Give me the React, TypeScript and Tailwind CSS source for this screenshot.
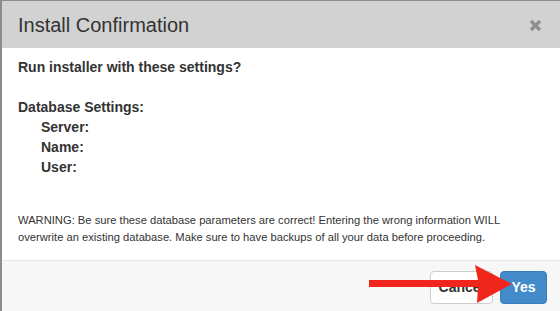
import React from "react";

export default function App() {
  return (
    <div className="relative w-[560px] h-[311px] flex bg-[#8c8c8c] overflow-hidden font-['Liberation_Sans',Arial,sans-serif] text-[#333]">
      <div className="w-[2px] shrink-0" />
      <div className="flex-1 flex flex-col mt-[1px]">
        <div className="h-[47px] shrink-0 bg-[#d2d2d2] flex items-center justify-between pl-[16px] pr-[18px]">
          <h4 className="text-[20px] leading-[22px] text-[#333]">Install Confirmation</h4>
          <svg width="13" height="13" viewBox="0 0 13 13" className="mt-[1px]">
            <path d="M2 2 L11 11 M11 2 L2 11" stroke="#8e8e8e" strokeWidth="3.4" strokeLinecap="butt" />
          </svg>
        </div>
        <div className="flex-1 bg-white pl-[16px] pt-[9px] text-[14px] leading-[20px]">
          <div className="font-bold">Run installer with these settings?</div>
          <div className="h-[20px]" />
          <div className="font-bold">Database Settings:</div>
          <div className="font-bold pl-[23px]">Server:</div>
          <div className="font-bold pl-[23px]">Name:</div>
          <div className="font-bold pl-[23px]">User:</div>
          <p className="mt-[35px] text-[11.2px] leading-[17px] pr-[20px]">
            WARNING: Be sure these database parameters are correct! Entering the wrong information WILL
            <br />
            overwrite an existing database. Make sure to have backups of all your data before proceeding.
          </p>
        </div>
        <div className="h-[51px] shrink-0 border-t border-[#e5e5e5] bg-[#f7f7f7] flex justify-end items-start pt-[10px] pr-[13px] gap-[7px]">
          <button className="w-[63px] h-[33px] rounded-[4px] border border-[#cccccc] bg-white text-[14px] font-bold text-[#333]">
            Cancel
          </button>
          <button className="w-[47px] h-[33px] rounded-[4px] border border-[#357ebd] bg-[#428bca] text-[14px] font-bold text-white">
            Yes
          </button>
        </div>
      </div>
      <svg className="absolute left-0 top-0 pointer-events-none" width="560" height="311" viewBox="0 0 560 311">
        <path d="M369 280 L478 280 L475 265 L512 284 L477 303 L478 287 L369 287 Z" fill="#f0261d" />
      </svg>
    </div>
  );
}
